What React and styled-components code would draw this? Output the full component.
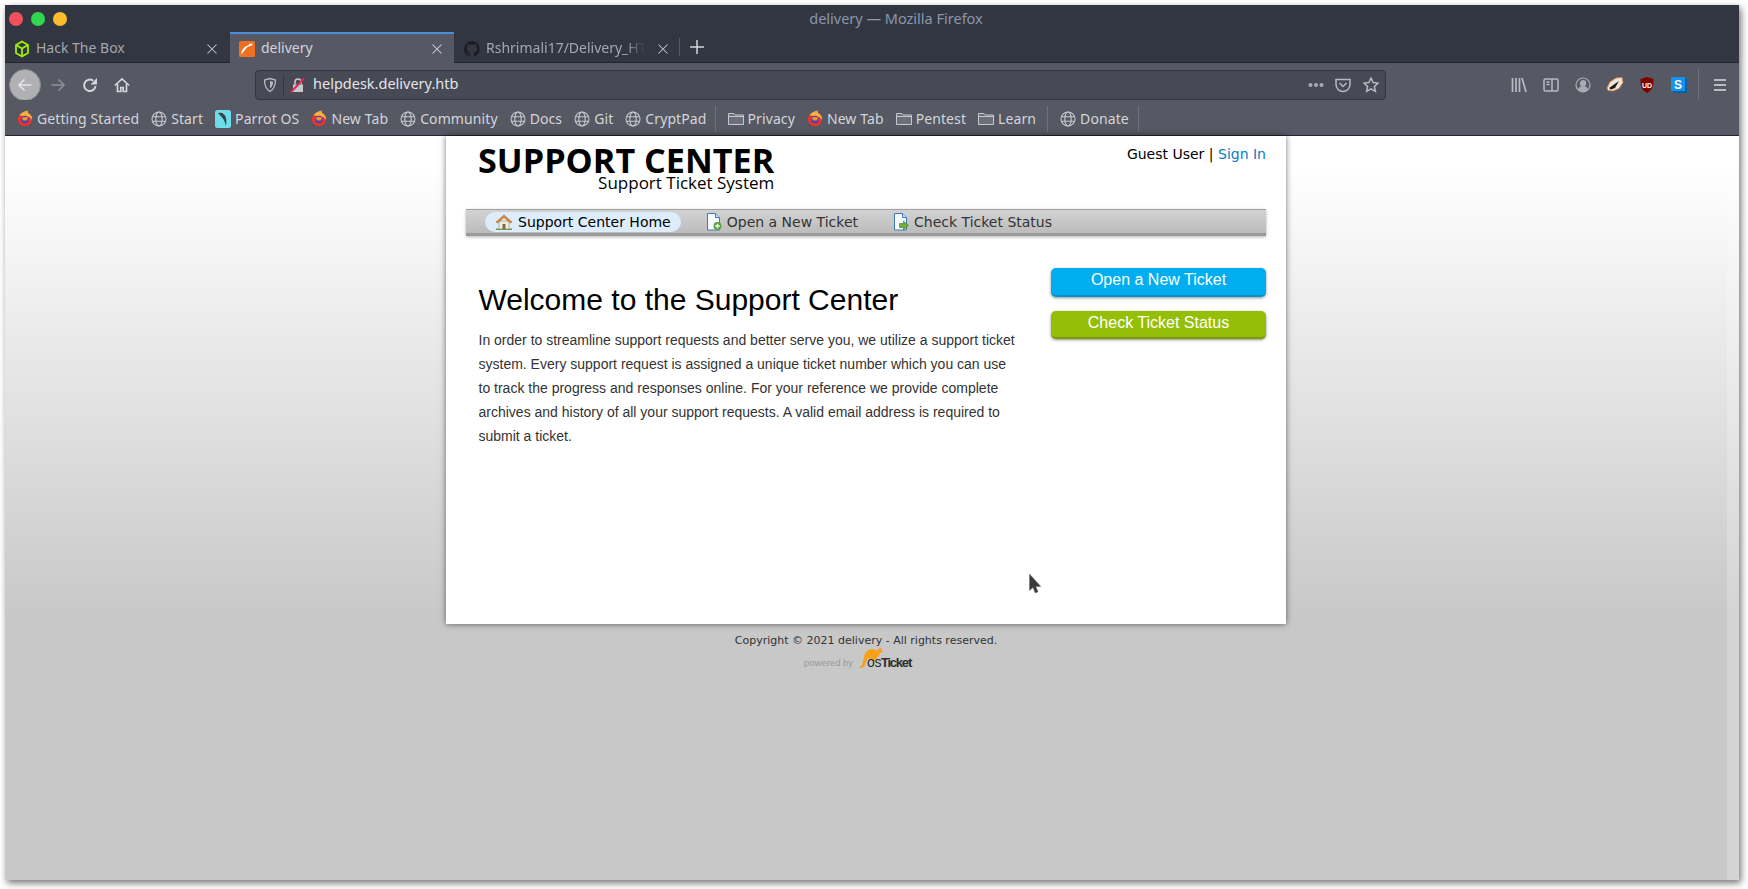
import React from "react";
import styled, { createGlobalStyle } from "styled-components";

const Global = createGlobalStyle`
  html, body { margin: 0; padding: 0; background: #fff; }
  #root { width: 1748px; height: 889px; overflow: hidden; }
`;

const UI_FONT = `"Noto Sans", "Open Sans", sans-serif`;
const PAGE_FONT = `"DejaVu Sans", Verdana, sans-serif`;
const TEXT_FONT = `"Liberation Sans", Arial, sans-serif`;

const Desktop = styled.div`
  width: 1748px;
  height: 889px;
  padding: 5px 9px 9px 5px;
  box-sizing: border-box;
  background: #fff;
`;
const Browser = styled.div`
  height: 100%;
  display: flex;
  flex-direction: column;
  box-shadow: 2px 3px 7px rgba(0, 0, 0, 0.55);
`;
const TitleBar = styled.div`
  height: 27px;
  flex: none;
  background: #323641;
  display: flex;
  align-items: center;
  padding-left: 4px;
`;
const Dots = styled.div`
  display: flex;
  gap: 8px;
`;
const Dot = styled.span`
  width: 14px;
  height: 14px;
  border-radius: 50%;
  background: ${(p) => p.$color};
`;
const WindowTitle = styled.div`
  flex: 1;
  margin-top: -2px;
  text-align: center;
  padding-right: 14px;
  font: 14.5px ${UI_FONT};
  color: #8b97aa;
`;
const TabStrip = styled.div`
  height: 31px;
  flex: none;
  box-sizing: border-box;
  background: #323641;
  display: flex;
  align-items: stretch;
  border-bottom: 1px solid #23262e;
`;
const Tab = styled.div`
  width: ${(p) => p.$width}px;
  box-sizing: border-box;
  display: flex;
  align-items: center;
  padding: 0 ${(p) => p.$right || 10}px 0 ${(p) => p.$left || 10}px;
  gap: 6px;
  font: 14px ${UI_FONT};
  color: ${(p) => (p.$active ? "#d3d5da" : "#a4a7b0")};
  background: ${(p) => (p.$active ? "#565864" : "transparent")};
  border-top: 2px solid ${(p) => (p.$active ? "#4a90d9" : "transparent")};
  margin-bottom: -1px;
`;
const TabLabel = styled.span`
  flex: 1;
  margin-top: -2px;
  overflow: hidden;
  white-space: nowrap;
  mask-image: ${(p) => (p.$fade ? "linear-gradient(to left, transparent 6px, #000 26px)" : "none")};
`;
const TabSep = styled.span`
  width: 1px;
  margin: 6px 0;
  background: #565864;
`;
const NewTab = styled.span`
  width: 34px;
  display: flex;
  align-items: center;
  justify-content: center;
  color: #d3d5da;
`;
const Toolbar = styled.div`
  height: 37px;
  flex: none;
  box-sizing: border-box;
  background: #565864;
  padding: 6px 0 0 4px;
  display: flex;
  align-items: center;
`;
const ToolIcon = styled.span`
  width: ${(p) => p.$width || 32}px;
  height: 30px;
  flex: none;
  display: flex;
  align-items: center;
  justify-content: center;
  color: ${(p) => p.$color || "#d3d5da"};
`;
const BackButton = styled.span`
  width: 32px;
  height: 32px;
  flex: none;
  margin-right: 1px;
  border-radius: 50%;
  background: #b1b1b3;
  border: 1px solid #8a8b90;
  box-sizing: border-box;
  display: flex;
  align-items: center;
  justify-content: center;
  color: #e4e4e6;
`;
const UrlBar = styled.div`
  width: 1131px;
  height: 30px;
  margin-left: 117px;
  box-sizing: border-box;
  background: #474955;
  border: 1px solid #33363f;
  border-radius: 4px;
  display: flex;
  align-items: center;
  padding-left: 6px;
  flex: none;
`;
const UrlSep = styled.span`
  width: 1px;
  height: 20px;
  margin: 0 6px 0 5px;
  background: #333640;
`;
const UrlText = styled.span`
  flex: 1;
  margin: -3px 0 0 7px;
  font: 14.5px ${UI_FONT};
  color: #e3e4e8;
`;
const RightTools = styled.div`
  margin-left: 117px;
  display: flex;
  align-items: center;
`;
const ToolSep = styled.span`
  width: 1px;
  height: 34px;
  margin: 0 5px 0 3px;
  background: #6f717c;
`;
const Bookmarks = styled.div`
  height: 36px;
  flex: none;
  box-sizing: border-box;
  background: #565864;
  border-bottom: 1px solid #23262e;
  padding: 2px 0 0 12px;
  display: flex;
  align-items: center;
  gap: 12px;
`;
const Bookmark = styled.span`
  display: flex;
  align-items: center;
  gap: 4px;
  font: 14px ${UI_FONT};
  letter-spacing: 0.1px;
  color: #d3d5da;
  white-space: nowrap;
`;
const BookmarkSep = styled.span`
  width: 1px;
  height: 26px;
  margin-left: ${(p) => p.$pull}px;
  background: #6f717c;
`;
const PageRow = styled.div`
  flex: 1;
  display: flex;
  min-height: 0;
  background: linear-gradient(#ffffff 0, #ffffff 30px, #c8c8c8 480px);
`;
const Page = styled.div`
  flex: 1;
`;
const Scrollbar = styled.div`
  width: 12px;
  flex: none;
  background: rgba(255, 255, 255, 0.22);
`;
const Card = styled.div`
  position: relative;
  width: 840px;
  height: 488px;
  margin: 0 auto;
  box-sizing: border-box;
  padding: 0 20px;
  background: #fff;
  box-shadow: 0 0 6px rgba(0, 0, 0, 0.55);
`;
const Header = styled.div`
  height: 73px;
  padding-left: 12px;
  display: flex;
  justify-content: space-between;
`;
const Logo = styled.div`
  display: flex;
  flex-direction: column;
  align-items: flex-end;
  color: #000;
  font-family: "Open Sans", sans-serif;
`;
const LogoMain = styled.div`
  font-size: 34.2px;
  font-weight: 700;
  line-height: 44px;
  margin-top: 2px;
`;
const LogoSub = styled.div`
  font-size: 17px;
  line-height: 18px;
  margin-top: -8px;
`;
const UserInfo = styled.div`
  font: 14px/20px ${PAGE_FONT};
  color: #000;
  padding-top: 8px;
  a {
    color: #0a7bc4;
    text-decoration: none;
  }
`;
const Nav = styled.div`
  height: 27px;
  box-sizing: border-box;
  display: flex;
  align-items: center;
  padding-left: 19px;
  gap: 15px;
  background: linear-gradient(#d2d2d2, #bcbcbc);
  border-top: 1px solid #a3a3a3;
  border-bottom: 3px solid #9a9a9a;
  box-shadow: 0 1px 3px rgba(0, 0, 0, 0.3);
`;
const NavItem = styled.span`
  height: 20px;
  display: flex;
  align-items: center;
  gap: 5px;
  padding: 0 10px;
  border-radius: 10px;
  font: 14px ${PAGE_FONT};
  color: ${(p) => (p.$active ? "#000" : "#333")};
  background: ${(p) => (p.$active ? "#dcecfb" : "transparent")};
`;
const Content = styled.div`
  display: flex;
  justify-content: space-between;
  padding-left: 12.5px;
`;
const Main = styled.div`
  width: 540px;
  padding-top: 44px;
  font-family: ${TEXT_FONT};
`;
const Heading = styled.h1`
  margin: 0 0 8px;
  font-size: 30px;
  font-weight: 400;
  line-height: 40px;
  color: #000;
`;
const Intro = styled.p`
  margin: 0;
  font-size: 14px;
  line-height: 24px;
  color: #333;
`;
const Side = styled.div`
  width: 215px;
  padding-top: 32px;
  display: flex;
  flex-direction: column;
  gap: 14px;
`;
const ActionButton = styled.div`
  height: ${(p) => p.$h}px;
  box-sizing: border-box;
  border-radius: 5px;
  text-align: center;
  font: 16px/23px ${TEXT_FONT};
  color: #fff;
  background: ${(p) => p.$bg};
  border-bottom: 2px solid ${(p) => p.$edge};
  box-shadow: 0 1px 3px rgba(0, 0, 0, 0.45);
`;
const Cursor = styled.svg`
  position: absolute;
  left: 583px;
  top: 438px;
`;
const Footer = styled.div`
  padding-top: 9px;
  display: flex;
  flex-direction: column;
  align-items: center;
`;
const Copyright = styled.div`
  font: 11px/16px ${PAGE_FONT};
  color: #333;
`;
const Powered = styled.div`
  display: flex;
  align-items: flex-end;
  height: 19px;
  margin-top: 1px;
  padding-right: 17px;
  font-family: ${TEXT_FONT};
`;
const PoweredBy = styled.span`
  font-size: 9.5px;
  line-height: 13px;
  color: #999;
  margin-right: 6px;
`;
const OsText = styled.span`
  font-size: 13px;
  line-height: 13px;
  color: #2d2d2d;
  margin-left: -16px;
  i {
    font-style: normal;
    font-size: 14px;
    letter-spacing: -0.5px;
  }
  b {
    font-weight: 700;
    letter-spacing: -1.2px;
  }
`;

const Stroke = ({ size = 16, children, w = 1.6 }) => (
  <svg width={size} height={size} viewBox="0 0 16 16" fill="none" stroke="currentColor" strokeWidth={w}>
    {children}
  </svg>
);

const Globe = () => (
  <svg width="16" height="16" viewBox="0 0 16 16" fill="none" stroke="#c6c8cf" strokeWidth="1.1">
    <circle cx="8" cy="8" r="7" />
    <ellipse cx="8" cy="8" rx="3.2" ry="7" />
    <path d="M1.5 5.7h13M1.5 10.3h13" />
  </svg>
);

const Folder = () => (
  <svg width="16" height="16" viewBox="0 0 16 16" fill="#6c6e7a" stroke="#c6c8cf" strokeWidth="1">
    <path d="M.5 2.500h5.500l1.200 1.500H15.500v9.500H.5z" />
    <path d="M.5 5.500h15" fill="none" />
  </svg>
);

const Firefox = () => (
  <svg width="16" height="17" viewBox="0 0 16 17">
    <circle cx="8" cy="9.300" r="7" fill="#e5352d" />
    <path d="M2.500 5C4.500 2.500 8 1 11 .5c-.8 1.500 0 2.500 2.200 4 1.600 1.600 2.100 3.300 1.800 5.300C13.500 7 11 6 8.500 6.500 6 6 4 5.800 2.500 5z" fill="#fbb03b" />
    <circle cx="8" cy="9.500" r="3.700" fill="#4a3fc0" />
    <path d="M4.800 7.800c1.800-.9 4.700-1 6.300-.2l-1.300 3H6.200z" fill="#f7941e" />
  </svg>
);

const ParrotIcon = () => (
  <svg width="16" height="18" viewBox="0 0 16 18">
    <rect width="16" height="18" rx="2.5" fill="#6fdde9" />
    <path d="M3 3c4-1 7 1 8 5 .5 3 .3 5 0 8-1-3-1.500-6-3.500-8C6 6 4.500 5 3 3z" fill="#33424d" />
  </svg>
);

const HtbIcon = () => (
  <svg width="16" height="18" viewBox="0 0 16 18" fill="none" stroke="#9fef00" strokeWidth="1.8" strokeLinejoin="round">
    <path d="M8 1.500l6 3.500v8l-6 3.500-6-3.500V5z" />
    <path d="M2 5l6 3.500L14 5M8 8.500v8" />
  </svg>
);

const DeliveryIcon = () => (
  <svg width="16" height="16" viewBox="0 0 16 16">
    <rect width="16" height="16" rx="1.5" fill="#f0701f" />
    <path d="M2 14c.5-5 3-8.500 7-9.500l2-2 3 .5-2 2c-3 0-5 2-6 4-1 1-3 3-4 5z" fill="#fff" />
  </svg>
);

const GithubIcon = () => (
  <svg width="16" height="16" viewBox="0 0 16 16" fill="#1b1d23">
    <path d="M8 0a8 8 0 0 0-2.500 15.600c.4.100.500-.2.500-.4v-1.400c-2.200.5-2.700-1-2.700-1-.4-.9-.9-1.200-.9-1.200-.7-.5.100-.5.100-.5.8.100 1.200.8 1.200.8.700 1.200 1.900.9 2.300.7.100-.5.300-.9.500-1.100-1.800-.2-3.600-.9-3.600-4 0-.9.300-1.600.8-2.100-.1-.2-.4-1 .100-2.100 0 0 .7-.2 2.200.8a7.500 7.500 0 0 1 4 0c1.500-1 2.200-.8 2.200-.8.400 1.100.2 1.900.1 2.100.5.600.8 1.300.8 2.100 0 3.100-1.900 3.700-3.700 3.900.3.300.6.800.6 1.500v2.200c0 .2.100.5.500.4A8 8 0 0 0 8 0z" />
  </svg>
);

const CloseIcon = () => (
  <Stroke size={12} w={1.4}>
    <path d="M2 2l12 12M14 2L2 14" />
  </Stroke>
);

const HomePic = () => (
  <svg width="18" height="16" viewBox="0 0 18 16">
    <path d="M1 14.500h16V16H1z" fill="#5f9e45" />
    <path d="M4 7h10v8H4z" fill="#f3ead8" stroke="#9a8a70" strokeWidth=".6" />
    <path d="M7.500 10h3v5h-3z" fill="#7a6a58" />
    <path d="M1 8l8-7 8 7-1.500 1L9 3.500 2.500 9z" fill="#d9863c" stroke="#a85f20" strokeWidth=".5" />
  </svg>
);

const DocPic = ({ arrow }) => (
  <svg width="16" height="18" viewBox="0 0 16 18">
    <path d="M1.500.5h8l4 4v12.500h-12z" fill="#f6fafe" stroke="#3f79b5" />
    <path d="M9.500.5v4h4" fill="#cfe2f5" stroke="#3f79b5" />
    {arrow ? (
      <path d="M6.500 10.500h4V8l5 4.500-5 4.500v-2.500h-4z" fill="#6fae3c" stroke="#3f7a1f" strokeWidth=".6" />
    ) : (
      <>
        <circle cx="11.500" cy="13" r="4" fill="#5ba23a" />
        <path d="M9.300 13h4.400M11.500 10.800v4.400" stroke="#fff" strokeWidth="1.300" />
      </>
    )}
  </svg>
);

const bookmarksA = [
  [<Firefox />, "Getting Started"],
  [<Globe />, "Start"],
  [<ParrotIcon />, "Parrot OS"],
  [<Firefox />, "New Tab"],
  [<Globe />, "Community"],
  [<Globe />, "Docs"],
  [<Globe />, "Git"],
  [<Globe />, "CryptPad"],
];
const bookmarksB = [
  [<Folder />, "Privacy"],
  [<Firefox />, "New Tab"],
  [<Folder />, "Pentest"],
  [<Folder />, "Learn"],
];

const App = () => {
  return (
    <Desktop>
      <Global />
      <Browser>
        <TitleBar>
          <Dots>
            <Dot $color="#f1515a" />
            <Dot $color="#33d74f" />
            <Dot $color="#fdbc2e" />
          </Dots>
          <WindowTitle>delivery — Mozilla Firefox</WindowTitle>
        </TitleBar>
        <TabStrip>
          <Tab $width={225} $left={9} $right={12}>
            <HtbIcon />
            <TabLabel>Hack The Box</TabLabel>
            <ToolIcon $width={12} $color="#c6c8cf"><CloseIcon /></ToolIcon>
          </Tab>
          <Tab $width={224} $active $left={9} $right={11}>
            <DeliveryIcon />
            <TabLabel>delivery</TabLabel>
            <ToolIcon $width={12} $color="#d3d5da"><CloseIcon /></ToolIcon>
          </Tab>
          <Tab $width={225}>
            <GithubIcon />
            <TabLabel $fade>Rshrimali17/Delivery_HTB</TabLabel>
            <ToolIcon $width={12} $color="#c6c8cf"><CloseIcon /></ToolIcon>
          </Tab>
          <TabSep />
          <NewTab>
            <Stroke w={1.5}><path d="M8 1v14M1 8h14" /></Stroke>
          </NewTab>
        </TabStrip>
        <Toolbar>
          <BackButton>
            <Stroke w={1.7}><path d="M14.500 8H2M7.500 2.500L2 8l5.500 5.500" /></Stroke>
          </BackButton>
          <ToolIcon $color="#8e9099">
            <Stroke w={1.5}><path d="M1.500 8H14M8.500 2.500L14 8l-5.500 5.500" /></Stroke>
          </ToolIcon>
          <ToolIcon>
            <Stroke w={2}>
              <path d="M13.500 9a5.700 5.700 0 1 1-2.200-5.200" />
              <path d="M15 1v6.500H8.500z" fill="currentColor" stroke="none" />
            </Stroke>
          </ToolIcon>
          <ToolIcon>
            <Stroke w={1.7}>
              <path d="M.8 8.500L8 1.800l7.200 6.700" />
              <path d="M3.500 7v7.500h3.300v-4h2.400v4h3.300V7" />
            </Stroke>
          </ToolIcon>
          <UrlBar>
            <ToolIcon $width={16} $color="#b7b9c0">
              <Stroke w={1.3}>
                <path d="M8 1.500l5.500 1.500c0 5-1 9-5.500 11.500C3.500 12 2.500 8 2.500 3z" />
                <path d="M8 4l3 .8c0 3-.6 5-3 6.700z" fill="currentColor" stroke="none" />
              </Stroke>
            </ToolIcon>
            <UrlSep />
            <svg width="16" height="16" viewBox="0 0 16 16">
              <path d="M3 7.500h10v7.500H3z" fill="#c6c8cf" />
              <path d="M5 7.500V5a3 3 0 0 1 6 0v2.500" fill="none" stroke="#c6c8cf" strokeWidth="1.600" />
              <path d="M1 15L14 1.500" stroke="#e22850" strokeWidth="2" />
            </svg>
            <UrlText>helpdesk.delivery.htb</UrlText>
            <ToolIcon $width={26} $color="#a9abb3">
              <svg width="16" height="16" viewBox="0 0 16 16" fill="currentColor">
                <circle cx="2.500" cy="8" r="2" />
                <circle cx="8" cy="8" r="2" />
                <circle cx="13.500" cy="8" r="2" />
              </svg>
            </ToolIcon>
            <ToolIcon $width={28} $color="#b7b9c0">
              <Stroke w={1.500}>
                <path d="M1 2.500h14v5a7 7 0 0 1-14 0z" />
                <path d="M4.500 6l3.500 3.500L11.500 6" />
              </Stroke>
            </ToolIcon>
            <ToolIcon $width={28} $color="#b7b9c0">
              <Stroke w={1.500}>
                <path d="M8 1l2.100 4.500 4.900.6-3.600 3.300 1 4.900L8 11.900l-4.400 2.400 1-4.900L1 6.100l4.900-.6z" />
              </Stroke>
            </ToolIcon>
          </UrlBar>
          <RightTools>
            <ToolIcon $color="#b9bbc2">
              <Stroke w={1.700}><path d="M1.500 1v14M5 1v14M8.500 1v14M11 1l4 14" /></Stroke>
            </ToolIcon>
            <ToolIcon $color="#b9bbc2">
              <Stroke w={1.500}>
                <rect x="1" y="2" width="14" height="12" rx="1.500" />
                <path d="M9 2v12" />
                <path d="M3.500 5h3M3.500 7.500h3" />
              </Stroke>
            </ToolIcon>
            <ToolIcon $color="#a9abb3">
              <Stroke w={1.200}>
                <circle cx="8" cy="8" r="7" />
                <circle cx="8" cy="6.300" r="2.600" fill="currentColor" />
                <path d="M3.500 12.500c.8-2 2.800-3 4.500-3s3.700 1 4.500 3a6 6 0 0 1-9 0z" fill="currentColor" />
              </Stroke>
            </ToolIcon>
            <ToolIcon>
              <svg width="18" height="16" viewBox="0 0 18 16">
                <path d="M1 11l3-6 6-4 6-.5 1 5-4 6-6 2.500-5-.5z" fill="#f0e6d8" stroke="#c98a4b" />
                <path d="M3 11l10-7-4 7-4 1.500z" fill="#1c1c1c" />
              </svg>
            </ToolIcon>
            <ToolIcon>
              <svg width="16" height="16" viewBox="0 0 16 16">
                <path d="M8 0l6.500 2c0 7-1 11-6.500 14C2.500 13 1.500 9 1.500 2z" fill="#800000" />
                <text x="8" y="10.500" fontSize="7" fontFamily="Liberation Sans" fontWeight="700" fill="#fff" textAnchor="middle">UD</text>
              </svg>
            </ToolIcon>
            <ToolIcon>
              <svg width="16" height="16" viewBox="0 0 16 16">
                <path d="M2 2h14v14H2z" fill="#0a5fa8" />
                <rect width="14" height="14" fill="#1592ef" />
                <text x="7" y="11.500" fontSize="12" fontFamily="Liberation Sans" fontWeight="700" fill="#fff" textAnchor="middle">S</text>
              </svg>
            </ToolIcon>
            <ToolSep />
            <ToolIcon $color="#b9bbc2">
              <Stroke w={2}><path d="M2 3h12M2 8h12M2 13h12" /></Stroke>
            </ToolIcon>
          </RightTools>
        </Toolbar>
        <Bookmarks>
          {bookmarksA.map(([icon, name], i) => (
            <Bookmark key={i}>{icon}{name}</Bookmark>
          ))}
          <BookmarkSep $pull={-4} />
          {bookmarksB.map(([icon, name], i) => (
            <Bookmark key={i}>{icon}{name}</Bookmark>
          ))}
          <BookmarkSep $pull={-1} />
          <Bookmark><Globe />Donate</Bookmark>
          <BookmarkSep $pull={-3} />
        </Bookmarks>
        <PageRow>
          <Page>
            <Card>
              <Header>
                <Logo>
                  <LogoMain>SUPPORT CENTER</LogoMain>
                  <LogoSub>Support Ticket System</LogoSub>
                </Logo>
                <UserInfo>Guest User | <a href="#signin">Sign In</a></UserInfo>
              </Header>
              <Nav>
                <NavItem $active><HomePic />Support Center Home</NavItem>
                <NavItem><DocPic />Open a New Ticket</NavItem>
                <NavItem><DocPic arrow />Check Ticket Status</NavItem>
              </Nav>
              <Content>
                <Main>
                  <Heading>Welcome to the Support Center</Heading>
                  <Intro>
                    In order to streamline support requests and better serve you, we utilize a support ticket
                    system. Every support request is assigned a unique ticket number which you can use
                    to track the progress and responses online. For your reference we provide complete
                    archives and history of all your support requests. A valid email address is required to
                    submit a ticket.
                  </Intro>
                </Main>
                <Side>
                  <ActionButton $h={29} $bg="#00aeef" $edge="#0795c9">Open a New Ticket</ActionButton>
                  <ActionButton $h={28} $bg="#95bf07" $edge="#7a9c05">Check Ticket Status</ActionButton>
                </Side>
              </Content>
              <Cursor width="12" height="20" viewBox="0 0 12 20">
                <path d="M.5 0v16.500l3.500-3 2.200 5.500 2.800-1.200-2.200-5.300h5z" fill="#3a3a3a" stroke="#6a6a6a" strokeWidth=".5" />
              </Cursor>
            </Card>
            <Footer>
              <Copyright>Copyright © 2021 delivery - All rights reserved.</Copyright>
              <Powered>
                <PoweredBy>powered by</PoweredBy>
                <svg width="24" height="22" viewBox="0 0 24 22">
                  <path d="M0 20.500C3 20 4 15 5 10 6 5 9 2 13 2c2 0 4 1.500 5 1.500C19 2.500 20 1.500 21 0l.5 1.500L23 .5 22.500 3 24 5l-3 1c-1 3-3 5.500-5 6.500V14h-2v-1.500c-2 0-4-1-5-1.500-1.500 1-2 5-3 7-1 2-3 3.500-6 3z" fill="#f7a11a" />
                </svg>
                <OsText><i>os</i><b>Ticket</b></OsText>
              </Powered>
            </Footer>
          </Page>
          <Scrollbar />
        </PageRow>
      </Browser>
    </Desktop>
  );
};

export default App;
